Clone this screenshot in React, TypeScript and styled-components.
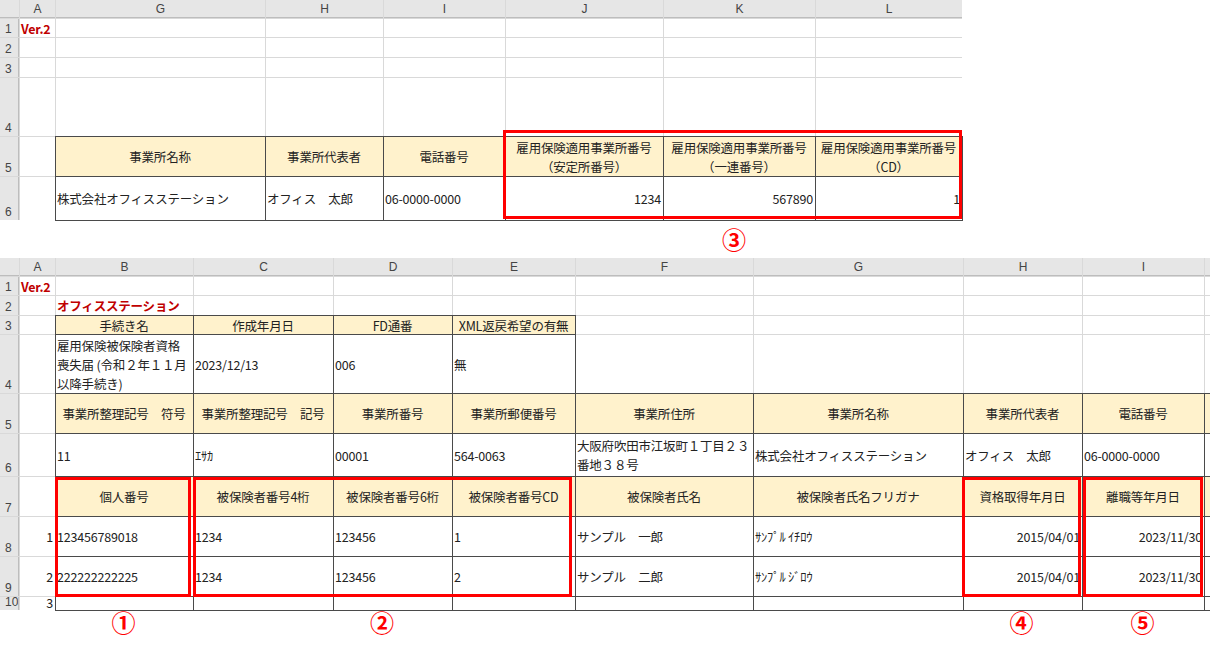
import React from "react";
import styled, { createGlobalStyle } from "styled-components";

const Global = createGlobalStyle`
    body {
        margin: 0;
        background: #fff;
        font-family: "Noto Sans CJK JP", "Noto Sans", sans-serif;
        color: #222;
    }
`;

type Kind = "plain" | "head" | "data";

interface CellSpec {
    t?: string;
    k?: Kind;
    a?: "l" | "c" | "r";
    red?: boolean;
    over?: boolean;
    top?: boolean;
}

const Page = styled.div`
    width: 1210px;
    height: 660px;
    overflow: hidden;
    display: flex;
    flex-direction: column;
`;

const SheetWrap = styled.div`
    position: relative;
`;

const Grid = styled.div<{ $cols: number[]; $rows: number[] }>`
    display: grid;
    grid-template-columns: ${p => p.$cols.map(c => c + "px").join(" ")};
    grid-template-rows: ${p => p.$rows.map(r => r + "px").join(" ")};
    gap: 1px;
    background: #d9d9d9;
    width: max-content;
`;

const ColHead = styled.div`
    background: #e6e6e6;
    font-family: "Liberation Sans", sans-serif;
    font-size: 12px;
    color: #444;
    display: flex;
    align-items: center;
    justify-content: center;
    border-bottom: 1px solid #bdbdbd;
`;

const RowHead = styled.div`
    background: #e6e6e6;
    font-family: "Liberation Sans", sans-serif;
    font-size: 12px;
    line-height: 13px;
    color: #444;
    display: flex;
    align-items: flex-end;
    padding: 0 0 1px 5px;
    border-right: 1px solid #bdbdbd;
    overflow: hidden;
`;

const Cell = styled.div<{ $k: Kind; $a: string; $red: boolean; $over: boolean; $top: boolean }>`
    background: ${p => (p.$k === "head" ? "#fff2cc" : "#fff")};
    box-shadow: ${p => (p.$k === "plain" ? "none" : "0 0 0 1px #4a4a4a")};
    position: ${p => (p.$k === "plain" ? "static" : "relative")};
    z-index: ${p => (p.$k === "plain" ? 0 : 1)};
    display: flex;
    align-items: ${p => (p.$top ? "flex-start" : "center")};
    justify-content: ${p => (p.$a === "c" ? "center" : p.$a === "r" ? "flex-end" : "flex-start")};
    text-align: ${p => (p.$a === "c" ? "center" : "left")};
    padding: 0 2px 0 1px;
    font-size: 12.5px;
    line-height: ${p => (p.$top ? "12px" : "19px")};
    letter-spacing: -0.2px;
    white-space: ${p => (p.$over ? "nowrap" : "pre")};
    overflow: ${p => (p.$over ? "visible" : "hidden")};
    color: ${p => (p.$red ? "#c00000" : "#222")};
    font-weight: ${p => (p.$red ? 700 : 400)};
`;

const RedBox = styled.div`
    position: absolute;
    border: 3px solid #ff0000;
    z-index: 3;
    pointer-events: none;
`;

const Marks = styled.div`
    display: grid;
    height: 38px;
    align-items: center;
`;

const Mark = styled.div`
    color: #ff0000;
    font-size: 24px;
    font-weight: 700;
    text-align: center;
    line-height: 1;
`;

const H: (t: string) => CellSpec = t => ({ t, k: "head", a: "c" });
const D: (t: string, a?: "l" | "r") => CellSpec = (t, a = "l") => ({ t, k: "data", a });
const E: CellSpec = {};

interface SheetProps {
    cols: number[];
    rows: number[];
    letters: string[];
    cells: CellSpec[][];
}

function Sheet(props: SheetProps): JSX.Element {
    const { cols, rows, letters, cells } = props;
    return <Grid $cols={cols} $rows={rows}>
        <ColHead />
        {letters.map((l, i) => <ColHead key={"c" + i}>{l}</ColHead>)}
        {cells.map((row, r) => [
            <RowHead key={"r" + r}>{r + 1}</RowHead>,
            ...letters.map((_, c) => {
                const s = row[c] || {};
                return <Cell key={r + "-" + c} $k={s.k || "plain"} $a={s.a || "l"} $red={!!s.red}
                    $over={!!s.over} $top={!!s.top}>{s.t}</Cell>;
            })
        ])}
    </Grid>;
}

const topCols = [19, 35, 209, 117, 121, 157, 151, 146];
const topRows = [18, 18, 19, 19, 58, 39, 43];
const topCells: CellSpec[][] = [
    [{ t: "Ver.2", red: true }],
    [], [], [],
    [E, H("事業所名称"), H("事業所代表者"), H("電話番号"),
        H("雇用保険適用事業所番号\n（安定所番号）"), H("雇用保険適用事業所番号\n（一連番号）"), H("雇用保険適用事業所番号\n（CD）")],
    [E, D("株式会社オフィスステーション"), D("オフィス　太郎"), D("06-0000-0000"),
        D("1234", "r"), D("567890", "r"), D("1", "r")],
];

const botCols = [19, 35, 137, 139, 118, 122, 177, 209, 118, 121, 20];
const botRows = [18, 18, 19, 18, 58, 39, 42, 39, 39, 39, 13];
const r10: CellSpec = { k: "data" };
const botCells: CellSpec[][] = [
    [{ t: "Ver.2", red: true, over: true }],
    [E, { t: "オフィスステーション", red: true, over: true }],
    [E, H("手続き名"), H("作成年月日"), H("FD通番"), H("XML返戻希望の有無")],
    [E, { t: "雇用保険被保険者資格\n喪失届 (令和２年１１月\n以降手続き)", k: "data" }, D("2023/12/13"), D("006"), D("無")],
    [E, H("事業所整理記号　符号"), H("事業所整理記号　記号"), H("事業所番号"), H("事業所郵便番号"),
        H("事業所住所"), H("事業所名称"), H("事業所代表者"), H("電話番号"), H("")],
    [E, D("11"), D("ｴｻｶ"), D("00001"), D("564-0063"), D("大阪府吹田市江坂町１丁目２３\n番地３８号"),
        D("株式会社オフィスステーション"), D("オフィス　太郎"), D("06-0000-0000"), D("")],
    [E, H("個人番号"), H("被保険者番号4桁"), H("被保険者番号6桁"), H("被保険者番号CD"),
        H("被保険者氏名"), H("被保険者氏名フリガナ"), H("資格取得年月日"), H("離職等年月日"), H("")],
    [{ t: "1", a: "r" }, D("123456789018"), D("1234"), D("123456"), D("1"), D("サンプル　一郎"),
        D("ｻﾝﾌﾟﾙ ｲﾁﾛｳ"), D("2015/04/01", "r"), D("2023/11/30", "r"), D("")],
    [{ t: "2", a: "r" }, D("222222222225"), D("1234"), D("123456"), D("2"), D("サンプル　二郎"),
        D("ｻﾝﾌﾟﾙ ｼﾞﾛｳ"), D("2015/04/01", "r"), D("2023/11/30", "r"), D("")],
    [{ t: "3", a: "r", top: true }, r10, r10, r10, r10, r10, r10, r10, r10, r10],
];

export default function App(): JSX.Element {
    return <Page>
        <Global />
        <SheetWrap>
            <Sheet cols={topCols} rows={topRows} letters={["A", "G", "H", "I", "J", "K", "L"]} cells={topCells} />
            <RedBox style={{ left: 503, top: 130, width: 453, height: 83 }} />
        </SheetWrap>
        <Marks style={{ gridTemplateColumns: "505px 458px" }}>
            <span />
            <Mark>③</Mark>
        </Marks>
        <SheetWrap>
            <Sheet cols={botCols} rows={botRows} letters={["A", "B", "C", "D", "E", "F", "G", "H", "I", ""]} cells={botCells} />
            <RedBox style={{ left: 55, top: 219, width: 130, height: 114 }} />
            <RedBox style={{ left: 193, top: 219, width: 373, height: 114 }} />
            <RedBox style={{ left: 962, top: 219, width: 113, height: 114 }} />
            <RedBox style={{ left: 1083, top: 219, width: 114, height: 114 }} />
        </SheetWrap>
        <Marks style={{ gridTemplateColumns: "55px 137px 380px 390px 119px 123px", height: 24 }}>
            <span />
            <Mark>①</Mark>
            <Mark>②</Mark>
            <span />
            <Mark>④</Mark>
            <Mark>⑤</Mark>
        </Marks>
    </Page>;
}
